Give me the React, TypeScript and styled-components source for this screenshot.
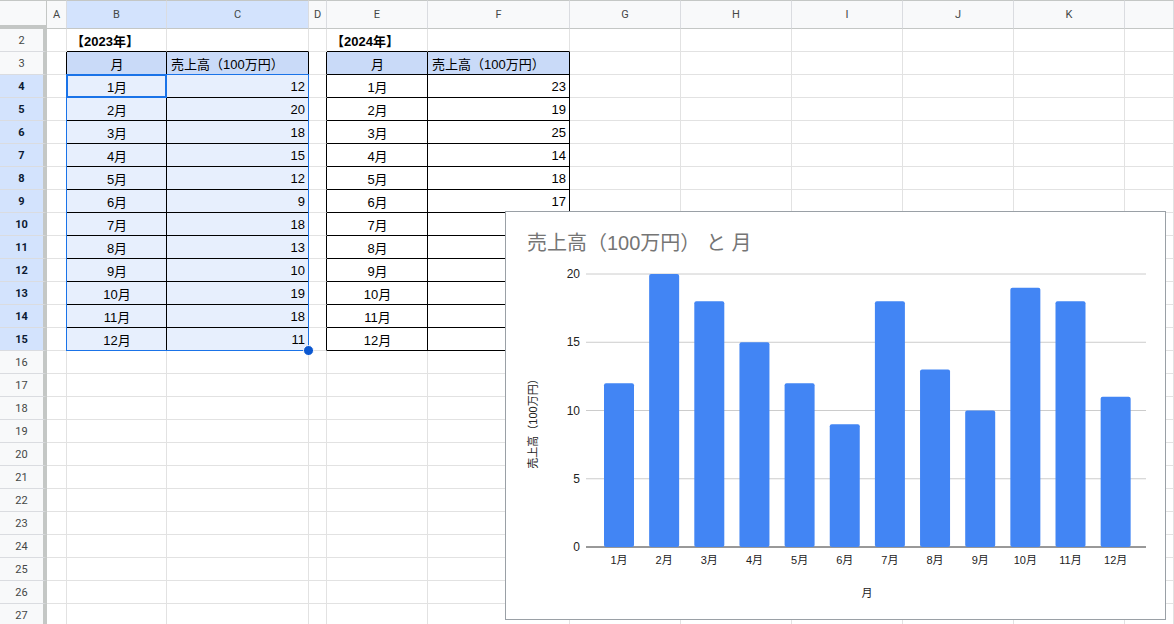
import React from "react";
import styled, { createGlobalStyle } from "styled-components";

const G = createGlobalStyle`
  body { margin: 0; background: #fff; font-family: "Liberation Sans", Arial, "Noto Sans CJK JP", sans-serif; overflow: hidden; }
`;

const COLS = [47, 20, 100, 142, 18, 101, 142, 111, 111, 111, 111, 111, 49];
const LETTERS = ["", "A", "B", "C", "D", "E", "F", "G", "H", "I", "J", "K", ""];
const HEAD_H = 29;
const ROW_H = 23;
const NROWS = 26;

const Sheet = styled.div`
  position: relative;
  display: grid;
  grid-template-columns: ${COLS.map((c) => c + "px").join(" ")};
  grid-template-rows: ${HEAD_H}px repeat(${NROWS}, ${ROW_H}px);
  width: 1174px;
  height: 624px;
  overflow: hidden;
`;

const ColHead = styled.div<{ $sel?: boolean; $corner?: boolean }>`
  box-sizing: border-box;
  background: ${(p) => (p.$sel ? "#d3e3fd" : "#f8f9fa")};
  border-top: 1px solid #c4c7c5;
  border-right: 1px solid ${(p) => (p.$corner ? "#c4c7c5" : "#dadce0")};
  border-bottom: ${(p) => (p.$corner ? 4 : 1)}px solid #c4c7c5;
  display: flex;
  align-items: center;
  justify-content: center;
  font-size: 11px;
  color: #444746;
  font-family: Roboto, "Liberation Sans", sans-serif;
`;

const RowHead = styled.div<{ $sel?: boolean }>`
  box-sizing: border-box;
  background: ${(p) => (p.$sel ? "#d3e3fd" : "#f8f9fa")};
  border-right: 4px solid #c4c7c5;
  border-bottom: 1px solid #dadce0;
  display: flex;
  align-items: center;
  justify-content: center;
  font-size: 11px;
  font-weight: ${(p) => (p.$sel ? 700 : 400)};
  color: ${(p) => (p.$sel ? "#0b1a33" : "#444746")};
  font-family: Roboto, "Liberation Sans", sans-serif;
`;

const Cell = styled.div<{ $br: string; $bb: string; $bg: string; $align: string; $bold?: boolean }>`
  box-sizing: border-box;
  background: ${(p) => p.$bg};
  border-right: 1px solid ${(p) => p.$br};
  border-bottom: 1px solid ${(p) => p.$bb};
  display: flex;
  align-items: center;
  justify-content: ${(p) => p.$align};
  padding: 0 3px 0 4px;
  font-size: 13px;
  font-weight: ${(p) => (p.$bold ? 700 : 400)};
  color: #000;
  white-space: nowrap;
  overflow: visible;
  font-family: "Liberation Sans", Arial, "Noto Sans CJK JP", sans-serif;
`;

const Selection = styled.div`
  position: absolute;
  box-sizing: border-box;
  border: 1px solid #1a73e8;
  pointer-events: none;
`;
const Active = styled.div`
  position: absolute;
  box-sizing: border-box;
  border: 2px solid #1a73e8;
`;
const Handle = styled.div`
  position: absolute;
  width: 9px;
  height: 9px;
  border-radius: 50%;
  background: #0b57d0;
  border: 1px solid #fff;
`;

const ChartBox = styled.div`
  position: absolute;
  left: 505px;
  top: 211px;
  width: 661px;
  height: 409px;
  box-sizing: border-box;
  border: 1px solid #9aa0a6;
  background: #fff;
`;

const v23 = [12, 20, 18, 15, 12, 9, 18, 13, 10, 19, 18, 11];
const v24 = [23, 19, 25, 14, 18, 17];

const colX = (i: number) => COLS.slice(0, i).reduce((a, b) => a + b, 0);
const rowY = (r: number) => HEAD_H + (r - 2) * ROW_H;

function inTable(r: number, c: number) {
  return r >= 3 && r <= 15 && (c === 2 || c === 3 || c === 5 || c === 6);
}

function content(r: number, c: number): { text: string; align: string; bold?: boolean } {
  if (r === 2 && c === 2) return { text: "【2023年】", align: "flex-start", bold: true };
  if (r === 2 && c === 5) return { text: "【2024年】", align: "flex-start", bold: true };
  if (r === 3 && (c === 2 || c === 5)) return { text: "月", align: "center" };
  if (r === 3 && (c === 3 || c === 6)) return { text: "売上高（100万円）", align: "flex-start" };
  if (r >= 4 && r <= 15) {
    const i = r - 4;
    if (c === 2 || c === 5) return { text: `${i + 1}月`, align: "center" };
    if (c === 3) return { text: String(v23[i]), align: "flex-end" };
    if (c === 6 && i < v24.length) return { text: String(v24[i]), align: "flex-end" };
  }
  return { text: "", align: "flex-start" };
}

function Chart() {
  const top = 62, base = 335, unit = (base - top) / 20;
  const months = v23.map((_, i) => `${i + 1}月`);
  return (
    <ChartBox>
      <svg width="659" height="407" fontFamily='"Liberation Sans", Arial, "Noto Sans CJK JP", sans-serif'>
        <text x="21" y="38" fontSize="20" fill="#757575">売上高（100万円） と 月</text>
        {[0, 5, 10, 15, 20].map((t) => {
          const y = base - t * unit;
          return (
            <g key={t}>
              <line x1="80" x2="640" y1={y} y2={y} stroke={t === 0 ? "#333" : "#ccc"} strokeWidth="1" />
              <text x="74" y={y + 4} fontSize="12" textAnchor="end" fill="#222">{t}</text>
            </g>
          );
        })}
        {v23.map((v, i) => {
          const cx = 113 + i * 45.15;
          const h = v * unit;
          return (
            <g key={i}>
              <rect x={cx - 15} y={base - h} width="30" height={h} rx="2" fill="#4285f4" />
              <text x={cx} y={352} fontSize="11" textAnchor="middle" fill="#222">{months[i]}</text>
            </g>
          );
        })}
        <text x="361" y="385" fontSize="11" textAnchor="middle" fill="#222">月</text>
        <text transform="translate(31,209) rotate(-90)" fontSize="11" textAnchor="middle" fill="#222">売上高（100万円）</text>
      </svg>
    </ChartBox>
  );
}

export default function App() {
  const cells: React.ReactNode[] = [];
  LETTERS.forEach((l, c) =>
    cells.push(
      <ColHead key={`h${c}`} $corner={c === 0} $sel={c === 2 || c === 3}>
        {l}
      </ColHead>
    )
  );
  for (let r = 2; r < 2 + NROWS; r++) {
    cells.push(
      <RowHead key={`r${r}`} $sel={r >= 4 && r <= 15}>
        {r}
      </RowHead>
    );
    for (let c = 1; c < COLS.length; c++) {
      const t = inTable(r, c);
      const br = t || inTable(r, c + 1) ? "#000" : "#e2e2e2";
      const bb = t || inTable(r + 1, c) ? "#000" : "#e2e2e2";
      const sel = r >= 4 && r <= 15 && (c === 2 || c === 3);
      const bg = r === 3 && t ? "#c9daf8" : sel ? "#e7effd" : "#fff";
      const k = content(r, c);
      cells.push(
        <Cell key={`${r}-${c}`} $br={br} $bb={bb} $bg={bg} $align={k.align} $bold={k.bold}>
          {k.text}
        </Cell>
      );
    }
  }
  return (
    <>
      <G />
      <Sheet>
        {cells}
        <Selection style={{ left: colX(2) - 1, top: rowY(4) - 1, width: colX(4) - colX(2) + 1, height: rowY(16) - rowY(4) + 1 }} />
        <Active style={{ left: colX(2) - 1, top: rowY(4) - 1, width: COLS[2] + 1, height: ROW_H + 1 }} />
        <Handle style={{ left: colX(4) - 6, top: rowY(16) - 6 }} />
        <Chart />
      </Sheet>
    </>
  );
}
